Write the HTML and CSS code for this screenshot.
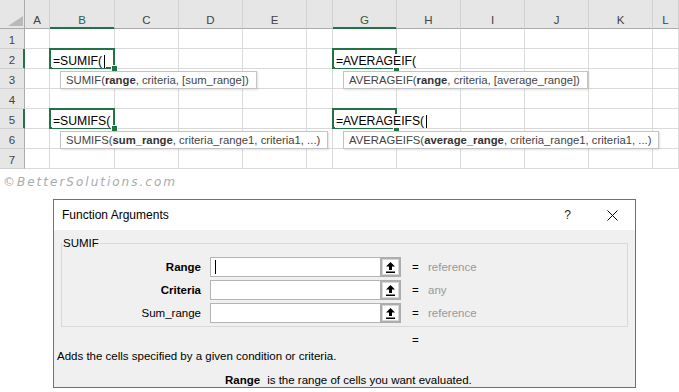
FILE: index.html
```html
<!DOCTYPE html>
<html>
<head>
    <link rel="stylesheet" href="styles.css">
</head>
<body>
    <div class="sheet">
        <div class="row head">
            <div class="corner">
                <svg width="15" height="10" viewBox="0 0 15 10"><polygon points="15,0 15,10 0,10" fill="#b9b9b9"/></svg>
            </div>
            <div class="col">A</div>
            <div class="col active">B</div>
            <div class="col">C</div>
            <div class="col">D</div>
            <div class="col">E</div>
            <div class="col"></div>
            <div class="col active">G</div>
            <div class="col">H</div>
            <div class="col">I</div>
            <div class="col">J</div>
            <div class="col">K</div>
            <div class="col">L</div>
        </div>
        <div class="row">
            <div class="num">1</div>
            <div class="cell"></div><div class="cell"></div><div class="cell"></div><div class="cell"></div>
            <div class="cell"></div><div class="cell"></div><div class="cell"></div><div class="cell"></div>
            <div class="cell"></div><div class="cell"></div><div class="cell"></div><div class="cell"></div>
        </div>
        <div class="row">
            <div class="num active">2</div>
            <div class="cell"></div>
            <div class="cell editing">
                <span class="entry">=SUMIF(<i class="caret"></i></span>
                <div class="tip">SUMIF(<b>range</b>, criteria, [sum_range])</div>
            </div>
            <div class="cell"></div><div class="cell"></div><div class="cell"></div><div class="cell"></div>
            <div class="cell editing">
                <span class="entry">=AVERAGEIF(</span>
                <div class="tip">AVERAGEIF(<b>range</b>, criteria, [average_range])</div>
            </div>
            <div class="cell"></div><div class="cell"></div><div class="cell"></div><div class="cell"></div><div class="cell"></div>
        </div>
        <div class="row">
            <div class="num">3</div>
            <div class="cell"></div><div class="cell"></div><div class="cell"></div><div class="cell"></div>
            <div class="cell"></div><div class="cell"></div><div class="cell"></div><div class="cell"></div>
            <div class="cell"></div><div class="cell"></div><div class="cell"></div><div class="cell"></div>
        </div>
        <div class="row">
            <div class="num">4</div>
            <div class="cell"></div><div class="cell"></div><div class="cell"></div><div class="cell"></div>
            <div class="cell"></div><div class="cell"></div><div class="cell"></div><div class="cell"></div>
            <div class="cell"></div><div class="cell"></div><div class="cell"></div><div class="cell"></div>
        </div>
        <div class="row">
            <div class="num active">5</div>
            <div class="cell"></div>
            <div class="cell editing">
                <span class="entry">=SUMIFS(</span>
                <div class="tip">SUMIFS(<b>sum_range</b>, criteria_range1, criteria1, ...)</div>
            </div>
            <div class="cell"></div><div class="cell"></div><div class="cell"></div><div class="cell"></div>
            <div class="cell editing">
                <span class="entry">=AVERAGEIFS(<i class="caret"></i></span>
                <div class="tip">AVERAGEIFS(<b>average_range</b>, criteria_range1, criteria1, ...)</div>
            </div>
            <div class="cell"></div><div class="cell"></div><div class="cell"></div><div class="cell"></div><div class="cell"></div>
        </div>
        <div class="row">
            <div class="num">6</div>
            <div class="cell"></div><div class="cell"></div><div class="cell"></div><div class="cell"></div>
            <div class="cell"></div><div class="cell"></div><div class="cell"></div><div class="cell"></div>
            <div class="cell"></div><div class="cell"></div><div class="cell"></div><div class="cell"></div>
        </div>
        <div class="row">
            <div class="num">7</div>
            <div class="cell"></div><div class="cell"></div><div class="cell"></div><div class="cell"></div>
            <div class="cell"></div><div class="cell"></div><div class="cell"></div><div class="cell"></div>
            <div class="cell"></div><div class="cell"></div><div class="cell"></div><div class="cell"></div>
        </div>
    </div>

    <div class="watermark">©BetterSolutions.com</div>

    <div class="dialog">
        <div class="dialog-title">
            <span class="title">Function Arguments</span>
            <span class="help">?</span>
            <svg class="close" width="11" height="11" viewBox="0 0 11 11">
                <path d="M0.5 0.5 L10.5 10.5 M10.5 0.5 L0.5 10.5" stroke="#000" stroke-width="1"/>
            </svg>
        </div>
        <div class="dialog-body">
            <fieldset class="args">
                <legend>SUMIF</legend>
                <div class="arg">
                    <label class="arg-name strong">Range</label>
                    <div class="arg-input">
                        <div class="field"><i class="caret"></i></div>
                        <div class="ref-btn">
                            <svg width="9" height="11" viewBox="0 0 9 11"><polygon points="4.5,0 9,4.5 6,4.5 6,8 3,8 3,4.5 0,4.5" fill="#000"/><rect x="0" y="9.5" width="9" height="1.5" fill="#000"/></svg>
                        </div>
                    </div>
                    <span class="eq">=</span>
                    <span class="arg-value">reference</span>
                </div>
                <div class="arg">
                    <label class="arg-name strong">Criteria</label>
                    <div class="arg-input">
                        <div class="field"></div>
                        <div class="ref-btn">
                            <svg width="9" height="11" viewBox="0 0 9 11"><polygon points="4.5,0 9,4.5 6,4.5 6,8 3,8 3,4.5 0,4.5" fill="#000"/><rect x="0" y="9.5" width="9" height="1.5" fill="#000"/></svg>
                        </div>
                    </div>
                    <span class="eq">=</span>
                    <span class="arg-value">any</span>
                </div>
                <div class="arg">
                    <label class="arg-name">Sum_range</label>
                    <div class="arg-input">
                        <div class="field"></div>
                        <div class="ref-btn">
                            <svg width="9" height="11" viewBox="0 0 9 11"><polygon points="4.5,0 9,4.5 6,4.5 6,8 3,8 3,4.5 0,4.5" fill="#000"/><rect x="0" y="9.5" width="9" height="1.5" fill="#000"/></svg>
                        </div>
                    </div>
                    <span class="eq">=</span>
                    <span class="arg-value">reference</span>
                </div>
            </fieldset>
            <div class="result">=</div>
            <p class="desc">Adds the cells specified by a given condition or criteria.</p>
            <p class="arg-help"><b>Range</b>is the range of cells you want evaluated.</p>
        </div>
    </div>
</body>
</html>
```

FILE: styles.css
```css
body {
    margin: 0;
    height: 392px;
    overflow: hidden;
    background: white;
    font-family: "Liberation Sans", Arial, sans-serif;
}

/* spreadsheet */

.sheet {
    color: #444;
}

.row {
    display: grid;
    grid-template-columns: 25px 25px 65px 64px 64px 64px 26px 64px 64px 64px 64px 64px 1fr;
    height: 20px;
}

.row.head {
    height: 29px;
}

.row > div {
    box-sizing: border-box;
    position: relative;
}

.corner {
    background: #e6e6e6;
    border-right: 1px solid #ababab;
    border-bottom: 1px solid #ababab;
    display: flex;
    align-items: flex-end;
    justify-content: flex-end;
    padding: 0 1px 2px 0;
}

.corner svg {
    display: block;
}

.col {
    background: #e6e6e6;
    border-right: 1px solid #d0d0d0;
    border-bottom: 1px solid #ababab;
    display: flex;
    align-items: flex-end;
    justify-content: center;
    padding-bottom: 1px;
    font-size: 11.5px;
    line-height: 13px;
}

.col.active {
    border-bottom-color: #217346;
    box-shadow: inset 0 -1px 0 #217346;
    color: #2f5e44;
}

.num {
    background: #e6e6e6;
    border-right: 1px solid #ababab;
    border-bottom: 1px solid #d0d0d0;
    display: flex;
    align-items: flex-end;
    justify-content: center;
    padding-bottom: 1px;
    font-size: 11.5px;
    line-height: 13px;
}

.num.active {
    border-right-color: #217346;
    box-shadow: inset -1px 0 0 #217346;
}

.cell {
    border-right: 1px solid #dadada;
    border-bottom: 1px solid #dadada;
    display: flex;
    align-items: flex-end;
    white-space: nowrap;
}

.cell.editing::after {
    content: "";
    position: absolute;
    top: -1px;
    left: -1px;
    right: -1px;
    bottom: -1px;
    border: 2px solid #217346;
    z-index: 2;
}

.cell.editing::before {
    content: "";
    position: absolute;
    right: -4px;
    bottom: -4px;
    width: 5px;
    height: 5px;
    background: #217346;
    border: 1px solid white;
    z-index: 3;
}

.entry {
    position: relative;
    z-index: 3;
    margin-left: 2px;
    padding: 0 1px;
    background: white;
    color: #000;
    font-size: 12.2px;
    line-height: 14px;
}

.caret {
    display: inline-block;
    width: 1px;
    height: 13px;
    margin-left: 2px;
    background: #000;
    vertical-align: -3px;
}

.tip {
    position: absolute;
    top: 22px;
    left: 10px;
    z-index: 4;
    background: white;
    border: 1px solid #c3c3c3;
    box-shadow: 1px 1px 2px rgba(0,0,0,0.12);
    padding: 0 7px 0 5px;
    line-height: 16px;
    font-size: 11.3px;
    color: #444;
    white-space: nowrap;
}

.tip b {
    color: #333;
}

.watermark {
    height: 30px;
    padding-left: 3px;
    font-family: "DejaVu Sans", sans-serif;
    font-style: italic;
    font-size: 12px;
    letter-spacing: 2px;
    line-height: 26px;
    color: #aaa;
}

/* dialog */

.dialog {
    margin-left: 53px;
    width: 583px;
    box-sizing: border-box;
    border: 1px solid #707070;
    background: #f0f0f0;
    font-size: 11.5px;
    color: #000;
}

.dialog-title {
    height: 30px;
    background: white;
    display: flex;
    align-items: center;
    padding: 0 17px 0 8px;
}

.title {
    font-size: 12px;
}

.help {
    margin-left: auto;
    font-size: 12px;
    color: #222;
}

.close {
    display: block;
    margin-left: 36px;
}

.dialog-body {
    padding: 5px 7px 0 3px;
}

.args {
    margin: 0 0 0 4px;
    padding: 6px 0 3px 0;
    border: 1px solid #d9d9d9;
}

.args legend {
    padding: 0 1px;
    line-height: 16px;
}

.arg {
    display: grid;
    grid-template-columns: 148px 191px 27px auto;
    align-items: center;
    height: 20px;
}

.arg + .arg {
    margin-top: 3px;
}

.arg-name {
    text-align: right;
    padding-right: 9px;
}

.arg-name.strong {
    font-weight: bold;
}

.arg-input {
    display: flex;
    height: 20px;
}

.field {
    flex: 1;
    background: white;
    border: 1px solid #b4b4b4;
    border-right: none;
    display: flex;
    align-items: center;
}

.field .caret {
    margin-left: 4px;
    height: 14px;
    vertical-align: 0;
}

.ref-btn {
    width: 21px;
    box-sizing: border-box;
    border: 2px solid #adadad;
    box-shadow: inset 0 0 0 1px #d8d8d8;
    background: white;
    display: flex;
    align-items: center;
    justify-content: center;
}

.ref-btn svg {
    display: block;
}

.eq {
    padding-left: 11px;
}

.arg-value {
    color: #999;
}

.result {
    padding-left: 355px;
    margin-top: 6px;
    line-height: 14px;
}

.desc {
    margin: 2px 0 0;
    line-height: 14px;
}

.arg-help {
    margin: 10px 0 0;
    padding-left: 168px;
    line-height: 14px;
}

.arg-help b {
    margin-right: 7px;
}
```
